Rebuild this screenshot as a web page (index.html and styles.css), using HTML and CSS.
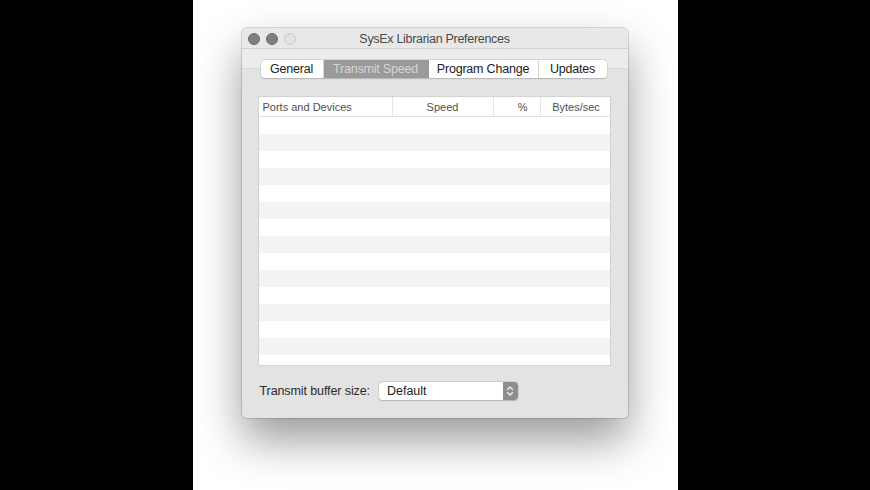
FILE: index.html
```html
<!DOCTYPE html>
<html>
<head>
<meta charset="utf-8">
<link rel="stylesheet" href="styles.css">
</head>
<body>
<div class="page">
  <div class="side"></div>
  <div class="stage">
    <div class="window">
      <div class="titlebar">
        <div class="lights">
          <span class="light"></span>
          <span class="light"></span>
          <span class="light off"></span>
        </div>
        <div class="title">SysEx Librarian Preferences</div>
      </div>
      <div class="content">
        <div class="tabstrip">
          <div class="segmented">
            <div class="seg s1">General</div>
            <div class="seg s2 selected">Transmit Speed</div>
            <div class="seg s3">Program Change</div>
            <div class="seg s4">Updates</div>
          </div>
        </div>
        <div class="tabbody">
          <div class="table">
            <div class="thead">
              <div class="th c1">Ports and Devices</div>
              <div class="th c2">Speed</div>
              <div class="th c3">%</div>
              <div class="th c4">Bytes/sec</div>
            </div>
            <div class="tbody">
              <div class="row"></div><div class="row alt"></div>
              <div class="row"></div><div class="row alt"></div>
              <div class="row"></div><div class="row alt"></div>
              <div class="row"></div><div class="row alt"></div>
              <div class="row"></div><div class="row alt"></div>
              <div class="row"></div><div class="row alt"></div>
              <div class="row"></div><div class="row alt"></div>
              <div class="row"></div>
            </div>
          </div>
          <div class="bottom">
            <span class="label">Transmit buffer size:</span>
            <div class="popup">
              <span class="popup-text">Default</span>
              <span class="stepper">
                <svg width="8" height="12" viewBox="0 0 8 12"><path d="M1.5 4.5 L4 2 L6.5 4.5 M1.5 7.5 L4 10 L6.5 7.5" fill="none" stroke="#f2f2f2" stroke-width="1.3" stroke-linecap="round" stroke-linejoin="round"/></svg>
              </span>
            </div>
          </div>
        </div>
      </div>
    </div>
  </div>
  <div class="side"></div>
</div>
</body>
</html>
```
FILE: styles.css
```css
html, body {
  margin: 0;
  padding: 0;
  background: #000;
}
.page {
  display: flex;
  width: 870px;
  height: 490px;
  overflow: hidden;
}
.side {
  flex: 1;
  background: #000;
}
.stage {
  width: 485px;
  background: #fff;
  padding: 28px 0 0 49px;
  box-sizing: border-box;
  overflow: hidden;
}
.window {
  width: 386px;
  height: 390px;
  border-radius: 5px;
  background: #e3e3e3;
  box-shadow: 0 0 0 1px rgba(0,0,0,0.13), 0 22px 45px rgba(0,0,0,0.4);
  display: flex;
  flex-direction: column;
  overflow: hidden;
  font-family: "Liberation Sans", Arial, sans-serif;
}
.titlebar {
  height: 20px;
  background: #e8e8e8;
  border-bottom: 1px solid #d2d2d2;
  display: flex;
  align-items: center;
  position: relative;
}
.lights {
  display: flex;
  gap: 6px;
  padding-left: 6px;
  margin-top: 1px;
}
.light {
  width: 12px;
  height: 12px;
  box-sizing: border-box;
  border-radius: 50%;
  background: #7f7f7f;
  border: 0.5px solid #6c6c6c;
}
.light.off {
  background: #e2e2e2;
  border-color: #c9c9c9;
}
.title {
  position: absolute;
  left: 0;
  right: 0;
  top: 4px;
  text-align: center;
  font-size: 12.5px;
  letter-spacing: -0.3px;
  color: #4a4a4a;
}
.content {
  flex: 1;
  display: flex;
  flex-direction: column;
}
.tabstrip {
  height: 19px;
  background: #ececec;
  position: relative;
}
.segmented {
  position: absolute;
  left: 19px;
  top: 11px;
  width: 346px;
  height: 18px;
  display: flex;
  background: #fff;
  border-radius: 4px;
  box-shadow: 0 0 0 0.5px #c4c4c4, 0 0.5px 1px rgba(0,0,0,0.25);
  overflow: hidden;
  z-index: 2;
}
.seg {
  font-size: 12.5px;
  letter-spacing: -0.2px;
  color: #222;
  display: flex;
  align-items: center;
  justify-content: center;
  border-right: 1px solid #d6d6d6;
  box-sizing: border-box;
}
.seg.s1 { width: 63px; }
.seg.s2 { width: 105px; }
.seg.s3 { width: 110px; }
.seg.s4 { flex: 1; border-right: none; }
.seg.selected {
  background: #9a9a9a;
  color: #d6d6d6;
  border-right-color: #9a9a9a;
}
.tabbody {
  flex: 1;
  border-top: 1px solid #d8d8d8;
  background: #e3e3e3;
  padding: 27px 16px 0 16px;
  display: flex;
  flex-direction: column;
}
.table {
  width: 353px;
  height: 270px;
  background: #fff;
  border: 1px solid #d3d3d3;
  box-sizing: border-box;
  display: flex;
  flex-direction: column;
  overflow: hidden;
}
.thead {
  height: 19px;
  display: flex;
  border-bottom: 1px solid #e2e2e2;
  flex-shrink: 0;
}
.th {
  font-size: 11px;
  color: #4f4f4f;
  display: flex;
  align-items: center;
  box-sizing: border-box;
  border-right: 1px solid #e6e6e6;
  padding: 0 4px;
}
.th.c1 { width: 134px; }
.th.c2 { width: 101px; justify-content: center; }
.th.c3 { width: 47px; justify-content: flex-end; padding-right: 12px; }
.th.c4 { flex: 1; justify-content: center; border-right: none; padding-left: 6px; }
.tbody {
  flex: 1;
}
.row {
  height: 17px;
  background: #fff;
}
.row.alt {
  background: #f3f3f3;
}
.bottom {
  display: flex;
  align-items: center;
  margin-top: 16px;
  padding-left: 2px;
}
.label {
  font-size: 12.5px;
  letter-spacing: -0.1px;
  color: #2b2b2b;
  margin-right: 9px;
}
.popup {
  width: 139px;
  height: 18px;
  background: #fff;
  border-radius: 4px;
  box-shadow: 0 0 0 0.5px #bdbdbd, 0 0.5px 1px rgba(0,0,0,0.25);
  display: flex;
  align-items: center;
  overflow: hidden;
}
.popup-text {
  flex: 1;
  font-size: 12.5px;
  color: #222;
  padding-left: 8px;
}
.stepper {
  width: 15px;
  height: 18px;
  background: #8e8e8e;
  display: flex;
  align-items: center;
  justify-content: center;
}
```
